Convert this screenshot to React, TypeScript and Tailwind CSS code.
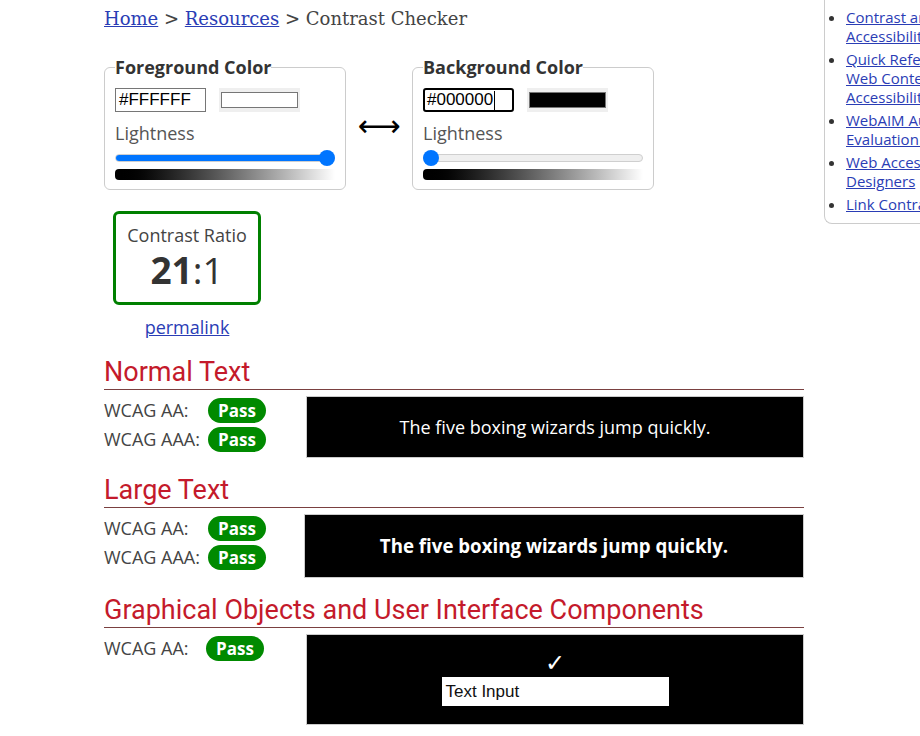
import React from "react";

const sans = "font-['Open_Sans',sans-serif]";

interface ColorBoxProps {
  legend: string;
  hex: string;
  swatch: string;
  value: number;
  focused?: boolean;
}

const ColorBox = ({ legend, hex, swatch, value, focused }: ColorBoxProps) => {
  return (
    <fieldset className="relative w-[242px] border border-[#cccccc] rounded-[6px] px-[10px] pb-[9px] mt-[-9px]">
      <legend className="px-0 text-[18px] font-bold text-[#333333] leading-[22px]">{legend}</legend>
      <div className="flex items-center gap-[13px] mt-[10px]">
        <div
          className={
            focused
              ? "w-[91px] h-[24px] border-2 border-black rounded-[3px] flex items-center pl-[2px] text-[17px] text-black font-['Liberation_Sans',sans-serif]"
              : "w-[91px] h-[24px] border border-[#767676] flex items-center pl-[3px] text-[17px] text-black font-['Liberation_Sans',sans-serif]"
          }
        >
          {hex}
          {focused && <span className="ml-[1px] w-px h-[19px] bg-black" />}
        </div>
        <div className="w-[81px] h-[24px] bg-[#efefef] flex items-center justify-center">
          <div className="w-[77px] h-[16px] border border-[#767676]" style={{ background: swatch }} />
        </div>
      </div>
      <div className="mt-[10px] text-[18px] text-[#555555] leading-[22px]">Lightness</div>
      <div className="relative mt-[6px] h-[16px] flex items-center">
        <div className="w-full h-[8px] rounded-full bg-[#efefef] border border-[#cfcfcf] overflow-hidden">
          <div className="h-full bg-[#0075ff]" style={{ width: `${value}%` }} />
        </div>
        <div
          className="absolute top-0 w-[16px] h-[16px] rounded-full bg-[#0075ff]"
          style={{ left: `calc(${value}% - ${(value / 100) * 16}px)` }}
        />
      </div>
      <div className="mt-[3px] h-[11px] rounded-l-[4px] bg-gradient-to-r from-black to-white" />
    </fieldset>
  );
};

const PassPill = () => (
  <span className="inline-flex items-center justify-center w-[58px] h-[25px] rounded-full bg-[#008a00] text-white font-bold text-[17px] leading-none">
    Pass
  </span>
);

const Row = ({ label, w = "w-[104px]" }: { label: string; w?: string }) => (
  <div className="flex items-center h-[29px]">
    <span className={`${w} text-[18px] text-[#444444]`}>{label}</span>
    <PassPill />
  </div>
);

const Heading = ({ children }: { children: React.ReactNode }) => (
  <h2 className="font-['Roboto',sans-serif] text-[27px] leading-[32px] text-[#c41a2b] border-b border-[#7a4040] pb-[1px]">
    {children}
  </h2>
);

export default function App() {
  return (
    <div className={`w-[920px] h-[736px] overflow-hidden bg-white flex ${sans}`}>
      <main className="ml-[104px] w-[700px] shrink-0">
        <nav className="mt-[7px] text-[18px] leading-[24px] text-[#444444] font-['DejaVu_Serif',serif]">
          <a className="text-[#2a3db5] underline">Home</a> &gt;{" "}
          <a className="text-[#2a3db5] underline">Resources</a> &gt; Contrast Checker
        </nav>

        <div className="flex items-start mt-[34px]">
          <ColorBox legend="Foreground Color" hex="#FFFFFF" swatch="#ffffff" value={100} />
          <div className="w-[66px] h-[120px] flex items-center justify-center text-[30px] text-black font-['DejaVu_Sans',sans-serif]">
            ⟷
          </div>
          <ColorBox legend="Background Color" hex="#000000" swatch="#000000" value={0} focused />
        </div>

        <div className="ml-[9px] mt-[21px] w-[148px] flex flex-col items-center">
          <div className="w-[148px] h-[94px] border-[3px] border-[#008000] rounded-[6px] flex flex-col items-center pt-[9px]">
            <div className="text-[18px] text-[#444444] leading-[24px]">Contrast Ratio</div>
            <div className="text-[37px] leading-[44px] text-[#333333] mt-[1px]">
              <span className="font-bold">21</span>:1
            </div>
          </div>
          <a className="mt-[10px] text-[18px] leading-[24px] text-[#2a3db5] underline">permalink</a>
        </div>

        <section className="mt-[17px]">
          <Heading>Normal Text</Heading>
          <div className="flex mt-[6px]">
            <div className="w-[202px]">
              <Row label="WCAG AA:" />
              <Row label="WCAG AAA:" />
            </div>
            <div className="w-[498px] h-[62px] bg-black border border-[#cccccc] flex items-center justify-center text-white text-[18px]">
              The five boxing wizards jump quickly.
            </div>
          </div>
        </section>

        <section className="mt-[16px]">
          <Heading>Large Text</Heading>
          <div className="flex mt-[6px]">
            <div className="w-[200px]">
              <Row label="WCAG AA:" />
              <Row label="WCAG AAA:" />
            </div>
            <div className="w-[500px] h-[64px] bg-black border border-[#cccccc] flex items-center justify-center text-white text-[18.7px] font-bold">
              The five boxing wizards jump quickly.
            </div>
          </div>
        </section>

        <section className="mt-[16px]">
          <Heading>Graphical Objects and User Interface Components</Heading>
          <div className="flex mt-[6px]">
            <div className="w-[202px]">
              <Row label="WCAG AA:" w="w-[102px]" />
            </div>
            <div className="w-[498px] h-[91px] bg-black border border-[#cccccc] flex flex-col items-center pt-[14px]">
              <div className="text-white text-[24px] leading-[28px] font-['DejaVu_Sans',sans-serif]">✓</div>
              <div className="w-[227px] h-[29px] bg-white flex items-center pl-[4px] text-[17px] text-[#111111] font-['Liberation_Sans',sans-serif]">
                Text Input
              </div>
            </div>
          </div>
        </section>
      </main>

      <aside className="ml-[20px] w-[200px] shrink-0 self-start border-l border-b border-[#cccccc] rounded-bl-[8px] pt-[8px] pb-[9px]">
        <ul className="list-disc pl-[21px] text-[15px] leading-[19px] text-[#2a3db5] flex flex-col gap-[4px] marker:text-[#333333]">
          <li>
            <a className="underline">Contrast and Color<br />Accessibility</a>
          </li>
          <li>
            <a className="underline">Quick Reference:<br />Web Content<br />Accessibility Guidelines</a>
          </li>
          <li>
            <a className="underline">WebAIM Automated<br />Evaluation Tool</a>
          </li>
          <li>
            <a className="underline">Web Accessibility for<br />Designers</a>
          </li>
          <li>
            <a className="underline">Link Contrast Checker</a>
          </li>
        </ul>
      </aside>
    </div>
  );
}
